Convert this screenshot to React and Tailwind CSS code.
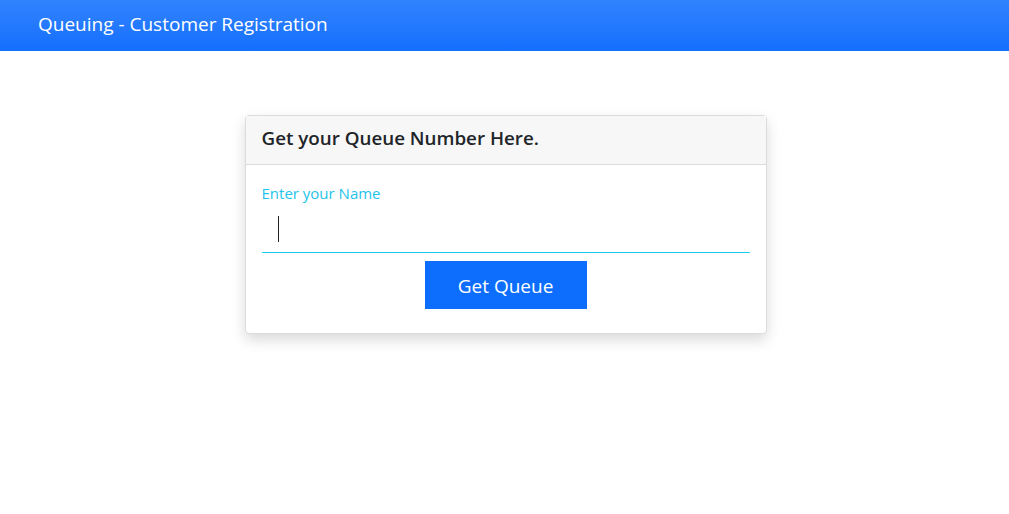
export default function App() {
  return (
    <div
      className="min-h-[514px] bg-white"
      style={{ fontFamily: '"Open Sans", "Noto Sans", sans-serif' }}
    >
      <header className="flex h-[51px] items-center bg-gradient-to-b from-[#3183fd] to-[#136ffe] px-[38px] pb-[2px]">
        <h1 className="text-[19px] text-white">Queuing - Customer Registration</h1>
      </header>

      <main className="flex justify-center pt-[64px] pl-[2px]">
        <section className="w-[522px] rounded border border-[#dcdcdc] bg-white shadow-[0_6px_14px_rgba(0,0,0,0.15)]">
          <div className="flex h-[49px] items-center border-b border-[#dcdcdc] bg-[#f7f7f7] px-4 pb-[4px]">
            <h2 className="text-[18.8px] font-semibold text-[#212529]">
              Get your Queue Number Here.
            </h2>
          </div>
          <div className="px-4 pt-[17px] pb-[24px]">
            <label className="block text-[15px] text-[#24c3ea]">Enter your Name</label>
            <div className="mt-[9px] flex h-[39px] items-start border-b border-[#1ccbef] pl-4 pt-[2px]">
              <span className="h-[26px] w-px bg-[#222]" />
            </div>
            <div className="mt-2 flex justify-center">
              <button className="h-[48px] w-[162px] bg-[#0d6efd] pt-[3px] text-[19px] text-white">
                Get Queue
              </button>
            </div>
          </div>
        </section>
      </main>
    </div>
  );
}
